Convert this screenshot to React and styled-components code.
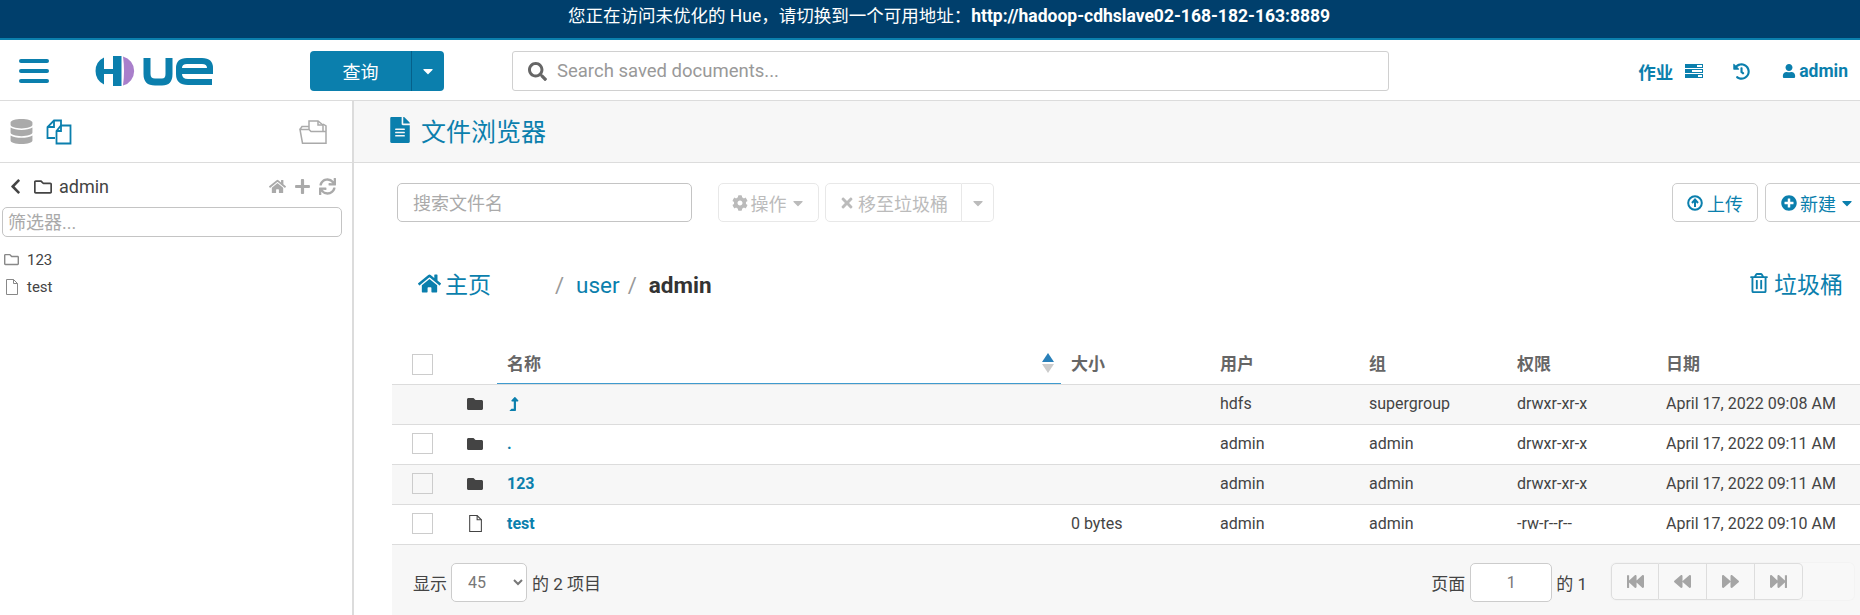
import React from "react";
import styled, { createGlobalStyle } from "styled-components";
import {
  FaBackward,
  FaCaretDown,
  FaChevronLeft,
  FaCog,
  FaDatabase,
  FaFastBackward,
  FaFastForward,
  FaFileAlt,
  FaFolder,
  FaForward,
  FaHistory,
  FaHome,
  FaLevelUpAlt,
  FaPlus,
  FaPlusCircle,
  FaRegFolder,
  FaRegTrashAlt,
  FaSearch,
  FaSync,
  FaTimes,
  FaUser,
} from "react-icons/fa";

const blue = "#0b7fad";
const line = "#dcdcdc";
const soft = "#f7f7f7";

const GlobalStyle = createGlobalStyle`
  html, body {
    margin: 0;
    height: 100%;
    overflow: hidden;
    background: #fff;
  }
  * { box-sizing: border-box; }
  body, input, select {
    font-family: Roboto, "Noto Sans CJK SC", sans-serif;
    color: #444;
  }
`;

const Page = styled.div`
  width: 1860px;
  height: 615px;
  display: flex;
  flex-direction: column;
  overflow: hidden;
`;

const Banner = styled.div`
  height: 40px;
  flex: none;
  background: #003f6c;
  border-bottom: 2px solid ${blue};
  color: #fff;
  font-size: 17.5px;
  line-height: 32px;
  text-align: center;
  padding-left: 38px;
  b { font-weight: 700; }
`;

const NavBar = styled.header`
  height: 61px;
  flex: none;
  display: flex;
  align-items: center;
  border-bottom: 1px solid ${line};
  padding: 2px 12px 0 19px;
`;

const Burger = styled.div`
  width: 30px;
  display: flex;
  flex-direction: column;
  gap: 6px;
  margin-right: 45px;
  span {
    height: 4px;
    border-radius: 2px;
    background: ${blue};
  }
`;

const Logo = styled.svg`
  width: 120px;
  height: 30px;
  flex: none;
  margin-right: 96px;
`;

const QueryButton = styled.div`
  display: flex;
  width: 134px;
  height: 40px;
  margin-right: 68px;
  color: #fff;
  background: ${blue};
  border-radius: 4px;
  font-size: 18px;
  flex: none;
`;

const QueryLabel = styled.div`
  width: 102px;
  display: flex;
  align-items: center;
  justify-content: center;
  border-right: 1px solid #05608a;
`;

const QueryCaret = styled.div`
  flex: 1;
  display: flex;
  align-items: center;
  justify-content: center;
  font-size: 16px;
`;

const SearchBox = styled.div`
  width: 877px;
  height: 40px;
  flex: none;
  display: flex;
  align-items: center;
  gap: 8px;
  padding-left: 15px;
  border: 1px solid #d0d0d0;
  border-radius: 3px;
  color: #666;
  font-size: 19px;
  input {
    border: 0;
    outline: 0;
    flex: 1;
    font-size: 18.5px;
    background: transparent;
    padding-bottom: 2px;
  }
  input::placeholder { color: #999; }
`;

const NavRight = styled.nav`
  margin-left: auto;
  display: flex;
  align-items: center;
  color: ${blue};
  font-weight: 700;
  font-size: 17.5px;
`;

const JobsIcon = styled.svg`
  width: 18px;
  height: 14px;
  margin: 0 30px 0 12px;
`;

const HistoryIcon = styled(FaHistory)`
  font-size: 17px;
  margin-right: 32px;
`;

const UserIcon = styled(FaUser)`
  font-size: 14px;
  margin-right: 3px;
`;

const Body = styled.div`
  flex: 1;
  display: flex;
  min-height: 0;
`;

const Sidebar = styled.aside`
  width: 354px;
  flex: none;
  border-right: 2px solid ${line};
`;

const SideTabs = styled.div`
  height: 62px;
  display: flex;
  align-items: center;
  padding: 0 25px 0 9px;
  border-bottom: 1px solid ${line};
  color: #aaa;
`;

const FilesGlyph = styled.svg`
  width: 26px;
  height: 26px;
  margin-left: 12px;
`;

const OpenFolderGlyph = styled.svg`
  width: 28px;
  height: 24px;
  margin-left: auto;
`;

const PathRow = styled.div`
  display: flex;
  align-items: center;
  height: 44px;
  padding: 3px 16px 0 7px;
  font-size: 18px;
  color: #444;
`;

const PathFolder = styled(FaRegFolder)`
  font-size: 18px;
  margin-left: 10px;
`;

const PathName = styled.span`
  margin-left: 7px;
`;

const PathActions = styled.div`
  margin-left: auto;
  display: flex;
  align-items: center;
  gap: 8px;
  color: #aaa;
  font-size: 17px;
`;

const SideFilter = styled.input`
  display: block;
  width: 340px;
  height: 30px;
  margin-left: 2px;
  padding: 0 5px;
  border: 1px solid #c4c4c4;
  border-radius: 5px;
  font-size: 18px;
  outline: 0;
  &::placeholder { color: #aaa; }
`;

const SideList = styled.ul`
  list-style: none;
  margin: 9px 0 0;
  padding: 0 0 0 4px;
`;

const SideItem = styled.li`
  display: flex;
  align-items: center;
  gap: 8px;
  height: 27px;
  font-size: 15px;
  color: #444;
  svg { color: #888; width: 15px; }
`;

const Main = styled.main`
  flex: 1;
  min-width: 0;
  display: flex;
  flex-direction: column;
`;

const TitleBar = styled.div`
  height: 62px;
  flex: none;
  display: flex;
  align-items: center;
  gap: 8px;
  padding: 0 0 3px 33px;
  background: ${soft};
  border-bottom: 1px solid ${line};
  color: ${blue};
  font-size: 25px;
  svg { font-size: 26px; }
`;

const Content = styled.div`
  padding-left: 38px;
  flex: 1;
  display: flex;
  flex-direction: column;
  min-height: 0;
`;

const Toolbar = styled.div`
  display: flex;
  align-items: stretch;
  height: 39px;
  margin-top: 20px;
  padding-left: 5px;
  width: 1479px;
  flex: none;
`;

const NameFilter = styled.input`
  width: 295px;
  margin-right: 26px;
  padding: 2px 15px 0;
  border: 1px solid #c4c4c4;
  border-radius: 5px;
  font-size: 18px;
  outline: 0;
  &::placeholder { color: #aaa; }
`;

const ToolButton = styled.div`
  display: flex;
  align-items: center;
  justify-content: center;
  gap: 3px;
  width: ${(p) => p.$w}px;
  margin-left: ${(p) => p.$left || 0}px;
  border: 1px solid ${(p) => (p.$off ? "#e8e8e8" : "#ccc")};
  border-radius: ${(p) => p.$radius || "5px"};
  color: ${(p) => (p.$off ? "#bbb" : blue)};
  font-size: 18px;
  flex: none;
  svg { font-size: 16px; }
`;

const SplitCaret = styled(ToolButton)`
  border-left: 0;
`;

const UploadButton = styled(ToolButton)`
  margin-left: auto;
  gap: 4px;
`;

const Crumbs = styled.div`
  height: 122px;
  flex: none;
  display: flex;
  align-items: center;
  color: ${blue};
  font-size: 22px;
`;

const HomeCrumb = styled.span`
  display: flex;
  align-items: center;
  gap: 4px;
  width: 137px;
  margin-left: 26px;
  font-size: 23px;
`;

const Slash = styled.span`
  color: #999;
  margin: 4px 8px 0 0;
`;

const Crumb = styled.span`
  margin: 4px 8px 0 4px;
  font-size: 22.5px;
`;

const Current = styled.strong`
  color: #333;
  margin: 4px 0 0 4px;
  font-size: 22.5px;
`;

const Trash = styled.span`
  margin-left: auto;
  margin-right: 17px;
  display: flex;
  align-items: center;
  gap: 5px;
  font-size: 23px;
  svg { font-size: 20px; }
`;

const Row = styled.div`
  display: grid;
  grid-template-columns: 75px 40px 564px 149px 149px 148px 149px 1fr;
  align-items: center;
  height: ${(p) => (p.$head ? 41 : 40)}px;
  flex: none;
  padding-bottom: ${(p) => (p.$head ? 0 : 2)}px;
  background: ${(p) => (p.$alt ? soft : "#fff")};
  border-bottom: 1px solid ${line};
  font-size: 16px;
  color: #444;
`;

const Check = styled.span`
  display: block;
  width: 21px;
  height: 21px;
  margin-left: 20px;
  border: 1px solid #ccc;
  background: ${(p) => (p.$alt ? soft : "#fff")};
`;

const HeadCell = styled.div`
  font-size: 17px;
  font-weight: 700;
  color: #666;
  padding-bottom: 3px;
`;

const SortCell = styled(HeadCell)`
  height: 40px;
  margin: 0 10px 0 -10px;
  padding: 0 7px 2px 10px;
  display: flex;
  align-items: center;
  justify-content: space-between;
  border-bottom: 1px solid #3f9bcf;
  align-self: start;
`;

const SortArrows = styled.span`
  display: flex;
  flex-direction: column;
  gap: 2px;
  i {
    width: 0;
    height: 0;
    border: 6px solid transparent;
    border-top: 0;
    border-bottom: 9px solid #2980b9;
  }
  i + i {
    border-bottom: 0;
    border-top: 9px solid #ccc;
  }
`;

const RowIcon = styled.span`
  color: #444;
  font-size: 16px;
  display: flex;
`;

const NameLink = styled.span`
  color: ${blue};
  font-weight: 700;
  font-size: 16px;
  display: flex;
  align-items: center;
`;

const FileGlyph = styled.svg`
  width: ${(p) => p.$size || 15}px;
  height: ${(p) => (p.$size || 15) + 1}px;
  fill: none;
  stroke: currentColor;
  stroke-width: 1;
`;

const Footer = styled.div`
  flex: 1;
  background: ${soft};
  display: flex;
  align-items: center;
  padding: 5px 6px 0 21px;
  font-size: 17px;
  color: #444;
`;

const SizeSelect = styled.select`
  width: 76px;
  height: 39px;
  margin: 0 5px 0 4px;
  padding-left: 12px;
  font-size: 16px;
  color: #777;
  background: #fff;
  border: 1px solid #ccc;
  border-radius: 5px;
`;

const PageArea = styled.div`
  margin-left: auto;
  display: flex;
  align-items: center;
`;

const PageInput = styled.input`
  width: 82px;
  height: 39px;
  margin: 0 4px 0 5px;
  border: 1px solid #ccc;
  border-radius: 5px;
  text-align: center;
  font-size: 16px;
  color: #777;
  outline: 0;
`;

const Pager = styled.div`
  width: 243px;
  height: 37px;
  margin: -3px 0 0 24px;
  display: flex;
  background: #f8f8f8;
  box-shadow: 0 0 0 1px #f3f3f3;
  border-radius: 5px;
`;

const PagerButton = styled.div`
  width: 48px;
  height: 37px;
  display: flex;
  align-items: center;
  justify-content: center;
  color: #a5a5a5;
  font-size: 17px;
  border: 1px solid #ddd;
  border-left-width: ${(p) => (p.$first ? 1 : 0)}px;
  border-radius: ${(p) => p.$radius || 0};
`;

const FilesIcon = () => (
  <FilesGlyph viewBox="0 0 26 26" fill="none" stroke={blue} strokeWidth="1.8">
    <path d="M9 19H1.5V8L8 1.5H15V6.5" />
    <path d="M8 1.5V8H1.5" />
    <path d="M15 6.5H24.5V24.5H10.5V12Z" />
    <path d="M15 6.5V12H10.5" />
  </FilesGlyph>
);

const OpenFolderIcon = () => (
  <OpenFolderGlyph viewBox="0 0 28 24" fill="none" stroke="#aaa" strokeWidth="1.5">
    <path d="M1 9.5H10L12 11.5H27V23.2H3.5Z" />
    <path d="M10 9V1H19L24 5V11" />
    <path d="M19 1V5H24" />
    <path d="M24 4L27 6V11" />
    <path d="M1 9.5L3 6.5H10" />
  </OpenFolderGlyph>
);

const UploadIcon = () => (
  <svg width="16" height="16" viewBox="0 0 16 16" fill="none" stroke={blue}>
    <circle cx="8" cy="8" r="6.8" strokeWidth="2" />
    <path d="M8 12V5M5 8l3-3.5L11 8" strokeWidth="2" />
  </svg>
);

const FileIcon = ({ size }) => (
  <FileGlyph $size={size} viewBox="0 0 15 16">
    <path d="M2.5 .5H9.5L13.5 4.5V15.5H2.5Z" />
    <path d="M9.5 .5V4.5H13.5" />
  </FileGlyph>
);

const rows = [
  { icon: "folder", up: true, user: "hdfs", group: "supergroup", perm: "drwxr-xr-x", date: "April 17, 2022 09:08 AM", noCheck: true },
  { icon: "folder", name: ".", user: "admin", group: "admin", perm: "drwxr-xr-x", date: "April 17, 2022 09:11 AM" },
  { icon: "folder", name: "123", user: "admin", group: "admin", perm: "drwxr-xr-x", date: "April 17, 2022 09:11 AM" },
  { icon: "file", name: "test", size: "0 bytes", user: "admin", group: "admin", perm: "-rw-r--r--", date: "April 17, 2022 09:10 AM" },
];

export default function App() {
  return (
    <Page>
      <GlobalStyle />
      <Banner>
        您正在访问未优化的 Hue，请切换到一个可用地址：<b>http://hadoop-cdhslave02-168-182-163:8889</b>
      </Banner>
      <NavBar>
        <Burger>
          <span />
          <span />
          <span />
        </Burger>
        <Logo viewBox="0 0 120 30">
          <path d="M10 1.5A15 15 0 0 0 10 28.5V18H19V30H27.5V0H19V13H10Z" fill={blue} />
          <path d="M29 0.5A15 15 0 0 1 29 29.5Q31 15 29 0.5Z" fill="#a97fcb" />
          <path d="M53 2V18Q53 26 61 26H68Q75 26 75 18V2" fill="none" stroke={blue} strokeWidth="7" />
          <path d="M118 26H94Q85 26 85 18V12Q85 5 93 5H108Q116 5 116 12V15H85" fill="none" stroke={blue} strokeWidth="6" />
        </Logo>
        <QueryButton>
          <QueryLabel>查询</QueryLabel>
          <QueryCaret>
            <FaCaretDown />
          </QueryCaret>
        </QueryButton>
        <SearchBox>
          <FaSearch />
          <input placeholder="Search saved documents..." />
        </SearchBox>
        <NavRight>
          作业
          <JobsIcon viewBox="0 0 18 14" fill={blue}>
            <rect width="18" height="4" />
            <rect y="5" width="18" height="4" />
            <rect y="10" width="18" height="4" />
            <rect x="12" y="1" width="5" height="2" fill="#fff" />
            <rect x="7" y="6" width="10" height="2" fill="#fff" />
            <rect x="13" y="11" width="4" height="2" fill="#fff" />
          </JobsIcon>
          <HistoryIcon />
          <UserIcon />
          admin
        </NavRight>
      </NavBar>
      <Body>
        <Sidebar>
          <SideTabs>
            <FaDatabase size={25} />
            <FilesIcon />
            <OpenFolderIcon />
          </SideTabs>
          <PathRow>
            <FaChevronLeft size={17} />
            <PathFolder />
            <PathName>admin</PathName>
            <PathActions>
              <FaHome />
              <FaPlus />
              <FaSync />
            </PathActions>
          </PathRow>
          <SideFilter placeholder="筛选器..." />
          <SideList>
            <SideItem>
              <FaRegFolder />
              123
            </SideItem>
            <SideItem>
              <FileIcon />
              test
            </SideItem>
          </SideList>
        </Sidebar>
        <Main>
          <TitleBar>
            <FaFileAlt />
            文件浏览器
          </TitleBar>
          <Content>
            <Toolbar>
              <NameFilter placeholder="搜索文件名" />
              <ToolButton $off $w={101}>
                <FaCog />
                操作
                <FaCaretDown />
              </ToolButton>
              <ToolButton $off $w={137} $left={6} $radius="5px 0 0 5px">
                <FaTimes />
                移至垃圾桶
              </ToolButton>
              <SplitCaret $off $w={32} $radius="0 5px 5px 0">
                <FaCaretDown />
              </SplitCaret>
              <UploadButton $w={86}>
                <UploadIcon />
                上传
              </UploadButton>
              <ToolButton $w={106} $left={7}>
                <FaPlusCircle />
                新建
                <FaCaretDown />
              </ToolButton>
            </Toolbar>
            <Crumbs>
              <HomeCrumb>
                <FaHome />
                主页
              </HomeCrumb>
              <Slash>/</Slash>
              <Crumb>user</Crumb>
              <Slash>/</Slash>
              <Current>admin</Current>
              <Trash>
                <FaRegTrashAlt />
                垃圾桶
              </Trash>
            </Crumbs>
            <Row $head>
              <Check />
              <span />
              <SortCell>
                名称
                <SortArrows>
                  <i />
                  <i />
                </SortArrows>
              </SortCell>
              <HeadCell>大小</HeadCell>
              <HeadCell>用户</HeadCell>
              <HeadCell>组</HeadCell>
              <HeadCell>权限</HeadCell>
              <HeadCell>日期</HeadCell>
            </Row>
            {rows.map((row, i) => (
              <Row key={i} $alt={i % 2 === 0}>
                {row.noCheck ? <span /> : <Check $alt={i % 2 === 0} />}
                <RowIcon>{row.icon === "folder" ? <FaFolder /> : <FileIcon size={16} />}</RowIcon>
                <NameLink>{row.up ? <FaLevelUpAlt size={14} /> : row.name}</NameLink>
                <span>{row.size}</span>
                <span>{row.user}</span>
                <span>{row.group}</span>
                <span>{row.perm}</span>
                <span>{row.date}</span>
              </Row>
            ))}
            <Footer>
              显示
              <SizeSelect defaultValue="45">
                <option>45</option>
              </SizeSelect>
              的 2 项目
              <PageArea>
                页面
                <PageInput defaultValue="1" />
                的 1
                <Pager>
                  <PagerButton $first $radius="5px 0 0 5px">
                    <FaFastBackward />
                  </PagerButton>
                  <PagerButton>
                    <FaBackward />
                  </PagerButton>
                  <PagerButton>
                    <FaForward />
                  </PagerButton>
                  <PagerButton $radius="0 5px 5px 0">
                    <FaFastForward />
                  </PagerButton>
                </Pager>
              </PageArea>
            </Footer>
          </Content>
        </Main>
      </Body>
    </Page>
  );
}
